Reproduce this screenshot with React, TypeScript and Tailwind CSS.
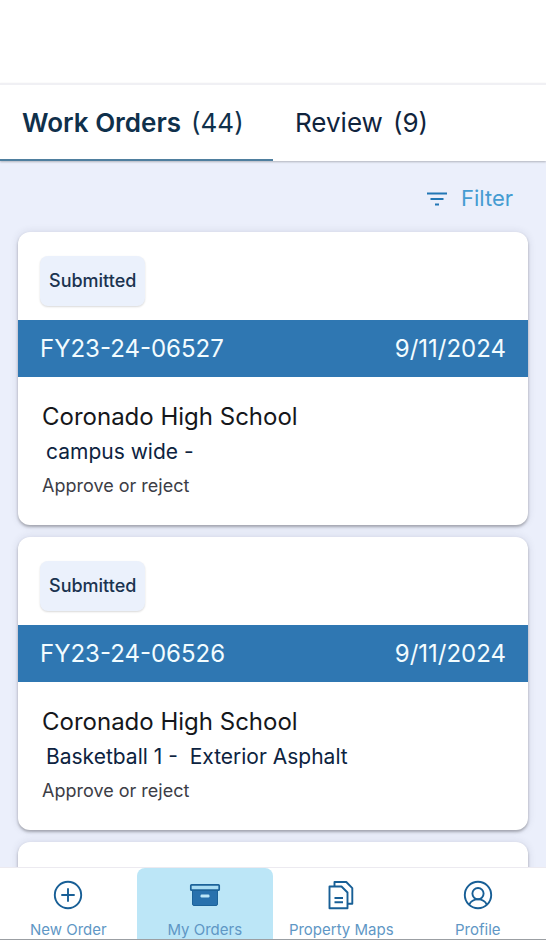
import { useState } from 'react';
import { clsx } from 'clsx';

interface WorkOrder {
  id: string;
  status: string;
  date: string;
  school: string;
  location: string;
  action: string;
}

const workOrders: WorkOrder[] = [
  {
    id: 'FY23-24-06527',
    status: 'Submitted',
    date: '9/11/2024',
    school: 'Coronado High School',
    location: 'campus wide -',
    action: 'Approve or reject'
  },
  {
    id: 'FY23-24-06526',
    status: 'Submitted',
    date: '9/11/2024',
    school: 'Coronado High School',
    location: 'Basketball 1 -  Exterior Asphalt',
    action: 'Approve or reject'
  }
];

const tabs = [
  { key: 'orders', label: 'Work Orders', count: 44 },
  { key: 'review', label: 'Review', count: 9 }
];

function FilterIcon() {
  return (
    <svg width="20" height="14" viewBox="0 0 20 14" fill="none" stroke="#2277b5" strokeWidth="1.8" aria-hidden="true">
      <path d="M0 1.5h20M3.5 7h13M8 12.5h4" />
    </svg>
  );
}

function NewOrderIcon() {
  return (
    <svg width="32" height="32" viewBox="0 0 32 32" fill="none" stroke="#185f96" strokeWidth="1.9" strokeLinecap="round" aria-hidden="true">
      <circle cx="16" cy="16" r="13.2" />
      <path d="M16 10v12M10 16h12" />
    </svg>
  );
}

function OrdersIcon() {
  return (
    <svg width="32" height="32" viewBox="0 0 32 32" aria-hidden="true">
      <path d="M3.5 11h25v14a1.5 1.5 0 0 1-1.5 1.5H5A1.5 1.5 0 0 1 3.5 25z" fill="#2871ad" stroke="#1c6299" strokeWidth="1" />
      <rect x="1.8" y="5.8" width="28.4" height="5.4" rx="0.8" fill="#a9dcf3" stroke="#1c6299" strokeWidth="1.7" />
      <rect x="11.5" y="15.6" width="9" height="2.8" rx="1.2" fill="#bce6f7" />
    </svg>
  );
}

function MapsIcon() {
  return (
    <svg width="32" height="32" viewBox="0 0 32 32" fill="none" stroke="#185f96" strokeWidth="1.9" strokeLinejoin="round" aria-hidden="true">
      <path d="M4.5 7.5h12l6 6v15.7h-18z" />
      <path d="M9.5 7.5V3h11.8l6 6.2v15.6h-4.8" />
      <path d="M9.5 19h8.5M9.5 23.2h8.5" />
    </svg>
  );
}

function ProfileIcon() {
  return (
    <svg width="32" height="32" viewBox="0 0 32 32" fill="none" stroke="#185f96" strokeWidth="1.9" aria-hidden="true">
      <circle cx="16" cy="16" r="13.2" />
      <circle cx="16" cy="14.6" r="5.6" />
      <path d="M7.2 25.6c1.4-3 4.6-5.2 8.8-5.2s7.4 2.2 8.8 5.2" />
    </svg>
  );
}

const navItems = [
  { key: 'new', label: 'New Order', icon: NewOrderIcon },
  { key: 'mine', label: 'My Orders', icon: OrdersIcon },
  { key: 'maps', label: 'Property Maps', icon: MapsIcon },
  { key: 'profile', label: 'Profile', icon: ProfileIcon }
];

function OrderCard({ order }: { order: WorkOrder }) {
  return (
    <article className="shrink-0 overflow-hidden rounded-xl bg-white shadow-[0_2px_3px_rgba(0,0,0,0.28),0_0_8px_rgba(40,40,70,0.12)]">
      <div className="px-[22px] pt-6 pb-3.5">
        <span className="inline-flex h-[50px] items-center rounded-lg bg-[#ebf1fc] px-[9px] text-lg font-medium text-[#1a3350] shadow-[0_1px_2px_rgba(0,0,0,0.15)]">
          {order.status}
        </span>
      </div>
      <div className="flex h-[57px] items-center justify-between bg-[#2f77b2] px-[22px] text-2xl text-[#f2fcff]">
        <span>{order.id}</span>
        <span>{order.date}</span>
      </div>
      <div className="px-6 py-6">
        <h2 className="text-2xl leading-8 text-[#15171b]">{order.school}</h2>
        <p className="pl-1 text-[21px] leading-[38px] whitespace-pre text-[#0d2340]">{order.location}</p>
        <p className="text-lg leading-[30px] text-[#3c3d46]">{order.action}</p>
      </div>
    </article>
  );
}

export default function App() {
  const [activeTab, setActiveTab] = useState('orders');
  const [activeNav, setActiveNav] = useState('mine');

  return (
    <div className="flex h-screen flex-col overflow-hidden bg-[#ebeffb] font-['Inter','Liberation_Sans',sans-serif]">
      <header className="shrink-0 bg-white pt-[83px]">
        {/* Tabs */}
        <div role="tablist" className="grid grid-cols-2 border-t-2 border-[#f0f0f4] shadow-[0_1px_2px_rgba(0,0,0,0.25)]">
          {tabs.map(({ key, label, count }) => (
            <button
              key={key}
              type="button"
              role="tab"
              aria-selected={activeTab === key}
              onClick={() => setActiveTab(key)}
              className={clsx(
                'flex h-[76px] items-center gap-2.5 border-b-2 px-[22px] text-[26px]',
                activeTab === key ? 'border-[#4f7f9f] text-[#0f304b]' : 'border-transparent text-[#10243d]'
              )}
            >
              <span className={activeTab === key ? 'font-semibold' : ''}>{label}</span>
              <span>({count})</span>
            </button>
          ))}
        </div>
      </header>

      <main className="flex min-h-0 flex-1 flex-col overflow-hidden px-[18px]">
        <div className="flex h-[71px] shrink-0 items-center justify-end pt-1 pr-[15px]">
          <button type="button" className="flex items-center gap-3.5 text-[22px] text-[#459cd2]">
            <FilterIcon />
            Filter
          </button>
        </div>

        {/* Order list */}
        <div className="flex flex-col gap-3">
          {workOrders.map(order => (
            <OrderCard key={order.id} order={order} />
          ))}
          <div className="h-24 shrink-0 rounded-xl bg-white shadow-[0_2px_3px_rgba(0,0,0,0.28),0_0_8px_rgba(40,40,70,0.12)]" />
        </div>
      </main>

      {/* Bottom navigation */}
      <nav className="relative grid shrink-0 grid-cols-4 border-t border-b border-t-[#eceaf0] border-b-[#9b9fa3] bg-white">
        {navItems.map(({ key, label, icon: Icon }) => (
          <button
            key={key}
            type="button"
            onClick={() => setActiveNav(key)}
            aria-current={activeNav === key ? 'page' : undefined}
            className={clsx(
              'flex h-[71px] flex-col items-center gap-2.5 rounded-t-lg pt-[11px] text-[15px] leading-[18px] whitespace-nowrap text-[#5f97c5]',
              activeNav === key && 'bg-[#bce6f7]'
            )}
          >
            <Icon />
            {label}
          </button>
        ))}
      </nav>
    </div>
  );
}
